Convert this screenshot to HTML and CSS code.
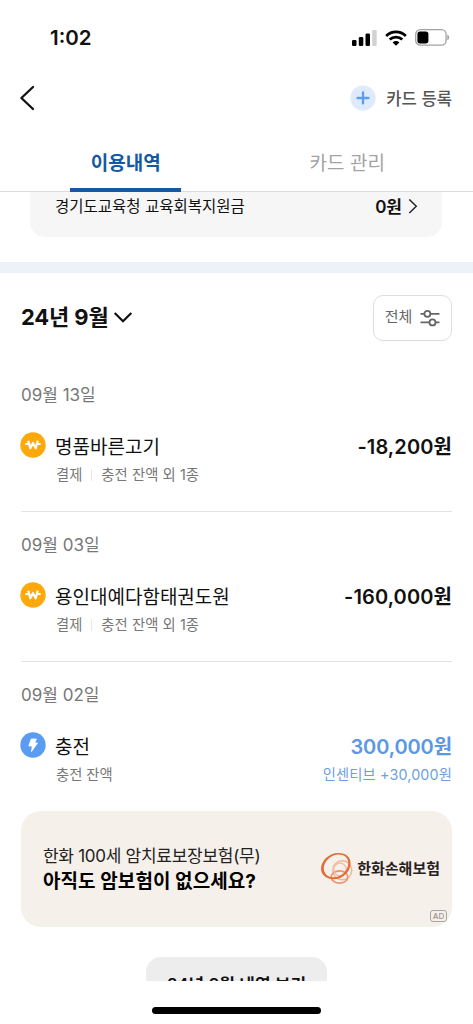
FILE: index.html
```html
<!DOCTYPE html>
<html lang="ko">
<head>
<meta charset="utf-8">
<meta name="viewport" content="width=device-width, initial-scale=1">
<title>이용내역</title>
<link rel="stylesheet" href="styles.css">
</head>
<body>
<div class="screen">
  <div class="status">
    <span class="clock">1:02</span>
    <div class="status-icons">
      <svg width="25" height="16" viewBox="0 0 25 16"><rect x="0" y="10" width="4.5" height="6" rx="1.3"/><rect x="6.8" y="7" width="4.5" height="9" rx="1.3"/><rect x="13.5" y="3.5" width="4.5" height="12.5" rx="1.3"/><rect x="20.2" y="0" width="4.5" height="16" rx="1.3" fill="#d2d2d2"/></svg>
      <svg class="wifi" width="22" height="16" viewBox="0 0 22 16"><g fill="none" stroke="#000" stroke-width="2.8"><path d="M1.2 5.9a14 14 0 0 1 19.6 0"/><path d="M4.7 9.6a9 9 0 0 1 12.6 0"/></g><path d="M11 15.8L7.6 12.4a4.8 4.8 0 0 1 6.8 0z"/></svg>
      <svg class="battery" width="35" height="17" viewBox="0 0 35 17"><rect x=".7" y=".7" width="30.4" height="15.4" rx="4.6" fill="none" stroke="#a2a2a2" stroke-width="1.3"/><rect x="2.4" y="2.4" width="11" height="12" rx="2.6"/><path d="M32.4 5.8c2.2.9 2.2 4.5 0 5.4z" fill="#999"/></svg>
    </div>
  </div>

  <header class="topbar">
    <svg width="16" height="26" viewBox="0 0 16 26"><path d="M14 2L2.4 13l11.600 11" fill="none" stroke="#111" stroke-width="2.3" stroke-linecap="round" stroke-linejoin="round"/></svg>
    <div class="register">
      <svg width="26" height="26" viewBox="0 0 26 26"><circle cx="13" cy="13" r="12.6" fill="#dfebfd"/><path d="M7.5 13h11M13 7.5v11" stroke="#5b9df2" stroke-width="2.3" stroke-linecap="round"/></svg>
      <span class="register-label">카드 등록</span>
    </div>
  </header>

  <nav class="tabs">
    <div class="tab tab-active"><span>이용내역</span></div>
    <div class="tab"><span>카드 관리</span></div>
  </nav>

  <div class="fund">
    <span class="fund-name">경기도교육청 교육회복지원금</span>
    <span class="fund-amount">0원</span>
    <svg width="10" height="16" viewBox="0 0 10 16"><path d="M1.3 .4L8.3 7.200l-7 6.800" fill="none" stroke="#222" stroke-width="1.4"/></svg>
  </div>
  <div class="band"></div>

  <section class="month">
    <div class="month-pick">
      <span class="month-label">24년 9월</span>
      <svg width="20" height="13" viewBox="0 0 20 13"><path d="M1.7 2L10 10.3 18.3 2" fill="none" stroke="#111" stroke-width="2.2"/></svg>
    </div>
    <div class="filter">
      <span>전체</span>
      <svg width="20" height="18" viewBox="0 0 20 18" fill="none" stroke="#666" stroke-width="1.8"><path d="M.5 4.800H4.200M10.600 4.800H19.500M.5 13.400H9.300M15.700 13.400H19.500"/><circle cx="7.4" cy="4.800" r="3"/><circle cx="12.5" cy="13.400" r="3"/></svg>
    </div>
  </section>

  <main>
    <article class="entry">
      <div class="date">09월 13일</div>
      <div class="row">
        <svg class="mark" width="26" height="26" viewBox="0 0 26 26"><circle cx="13" cy="13" r="12.7" fill="#fea90b"/><path d="M8.300 8.800l2 7.400L13 11l2.700 5.200 2-7.400M5.400 12h3M17.600 12h3" fill="none" stroke="#fff" stroke-width="2.2" stroke-linejoin="round"/></svg>
        <span class="name">명품바른고기</span><span class="amount">-18,200원</span>
      </div>
      <div class="sub"><span>결제</span><i class="sep"></i><span class="source">충전 잔액 외 1종</span></div>
    </article>
    <article class="entry">
      <div class="date">09월 03일</div>
      <div class="row">
        <svg class="mark" width="26" height="26" viewBox="0 0 26 26"><circle cx="13" cy="13" r="12.7" fill="#fea90b"/><path d="M8.300 8.800l2 7.400L13 11l2.700 5.200 2-7.400M5.400 12h3M17.600 12h3" fill="none" stroke="#fff" stroke-width="2.2" stroke-linejoin="round"/></svg>
        <span class="name">용인대예다함태권도원</span><span class="amount">-160,000원</span>
      </div>
      <div class="sub"><span>결제</span><i class="sep"></i><span class="source">충전 잔액 외 1종</span></div>
    </article>
    <article class="entry entry-last">
      <div class="date">09월 02일</div>
      <div class="row">
        <svg class="mark" width="26" height="26" viewBox="0 0 26 26"><circle cx="13" cy="13" r="12.7" fill="#5b9cf3"/><path d="M11.2 7h5.2l-1.600 4h2.700l-6 8.600.8-5.600H8.800z" fill="#fff" stroke="#fff" stroke-width=".8" stroke-linejoin="round"/></svg>
        <span class="name">충전</span><span class="amount plus">300,000원</span>
      </div>
      <div class="sub"><span>충전 잔액</span><span class="bonus">인센티브 +30,000원</span></div>
    </article>
  </main>

  <aside class="ad">
    <div class="ad-copy">
      <div class="ad-line">한화 100세 암치료보장보험(무)</div>
      <div class="ad-strong">아직도 암보험이 없으세요?</div>
    </div>
    <div class="brand">
      <svg width="34" height="34" viewBox="0 0 34 34" fill="none">
        <circle cx="22.3" cy="18.3" r="9.5" stroke="#efb79b" stroke-width="1.5"/>
        <ellipse cx="19.5" cy="25" rx="8.3" ry="6.2" stroke="#e8966f" stroke-width="1.7"/>
        <circle cx="20" cy="17.5" r="6.3" stroke="#f0bda4" stroke-width="1.3"/>
        <path fill-rule="evenodd" fill="#df6e38" d="M18.5 1C25.5.9 30.6 5 30.6 11.3 30.6 19.5 23 27.3 13.8 27.3 6.5 27.3 1 23 1 16.8 1 8.6 9 1.1 18.5 1zM18 2.6C10.8 2.9 3.8 9.7 3.8 16.5 3.8 21.8 8 25.3 13.8 25.3 21.3 25.3 28.3 18.5 28.3 11.3 28.3 5.8 24 2.4 18 2.6z"/>
      </svg>
      <span>한화손해보험</span>
    </div>
    <span class="ad-tag">AD</span>
  </aside>

  <div class="more-clip"><div class="more">24년 8월 내역 보기</div></div>
  <div class="home"></div>
</div>
</body>
</html>
```

FILE: styles.css
```css
* { box-sizing: border-box; }
body { margin: 0; background: #fff; font-family: Inter, "Noto Sans CJK KR", sans-serif; color: #111; }
.screen { width: 473px; height: 1024px; overflow: hidden; display: flex; flex-direction: column; white-space: nowrap; }
.screen > * { flex: none; }
svg { display: block; flex: none; }

.status { height: 75px; padding: 0 23px 0 50px; display: flex; align-items: center; justify-content: space-between; }
.clock { font-size: 20.5px; font-weight: 600; line-height: 24px; }
.status-icons { display: flex; align-items: center; }
.wifi { margin-left: 8px; }
.battery { margin-left: 8px; }

.topbar { height: 46px; padding: 0 21px 0 19px; display: flex; align-items: center; justify-content: space-between; }
.register { display: flex; align-items: center; gap: 10px; }
.register-label { font-family: "Noto Sans CJK KR", sans-serif; font-size: 16.6px; line-height: 24px; font-weight: 500; color: #555; }

.tabs { height: 71px; padding: 0 15px; display: flex; border-bottom: 1px solid #dcdcdc; }
.tab { flex: 1; display: flex; justify-content: center; padding-top: 29px; font-size: 19px; line-height: 28px; color: #a3a3a3; }
.tab-active { font-weight: 600; color: #1559a3; }
.tab-active span { width: 111px; height: 42px; text-align: center; border-bottom: 4px solid #1559a3; }

.fund { height: 45px; margin: 0 31px 25px 30px; padding: 1px 24px 16px 25px; border-radius: 0 0 15px 15px; background: #f6f6f6; display: flex; align-items: center; }
.fund-name { flex: 1; font-size: 15.5px; line-height: 24px; }
.fund-amount { font-size: 17px; font-weight: 600; margin-right: 6px; line-height: 24px; }
.band { height: 11px; background: #edf2f9; }

.month { height: 89px; padding: 0 21px; display: flex; align-items: center; justify-content: space-between; }
.month-pick { display: flex; align-items: center; gap: 5px; }
.month-label { font-size: 22px; line-height: 30px; font-weight: 700; letter-spacing: -.15px; margin-top: -1px; }
.filter { width: 79px; height: 46px; border: 1.5px solid #dedede; border-radius: 10px; display: flex; align-items: center; justify-content: center; gap: 8px; font-size: 15px; line-height: 22px; color: #666; }
.filter span { margin-top: -1px; }

.entry { height: 150px; margin: 0 21px; padding-top: 21px; border-bottom: 1px solid #e2e2e2; }
.entry-last { height: 149px; border-bottom: 0; }
.date { font-size: 17px; line-height: 24px; color: #777; }
.row { display: flex; align-items: center; height: 28px; margin-top: 26px; }
.mark { margin: -4px 9px 0 -1px; }
.name { flex: 1; font-size: 19px; line-height: 28px; padding-top: 2px; }
.amount { font-size: 20px; line-height: 28px; font-weight: 600; letter-spacing: .1px; }
.plus { color: #5b97e3; letter-spacing: -.1px; }
.sub { display: flex; align-items: center; margin: 3px 0 0 35px; font-size: 14.3px; line-height: 21px; color: #777; }
.sep { width: 1px; height: 12px; margin: 0 9px; background: #e8e8e8; }
.source { letter-spacing: .1px; }
.bonus { margin-left: auto; letter-spacing: .15px; color: #6c9fe0; }

.ad { position: relative; height: 116px; margin: 0 21px; padding: 0 12px 0 22px; border-radius: 20px; background: #f6f0ea; display: flex; align-items: center; justify-content: space-between; }
.ad-line { font-size: 17px; line-height: 26px; letter-spacing: -.28px; color: #222; }
.ad-strong { font-size: 19px; line-height: 26px; font-weight: 700; letter-spacing: .08px; color: #000; }
.brand { display: flex; align-items: center; gap: 3px; font-family: "Noto Sans CJK KR", sans-serif; font-size: 15px; line-height: 24px; font-weight: 700; color: #27211e; }
.brand span { margin-top: -2px; }
.ad-tag { position: absolute; right: 5px; bottom: 5px; width: 17px; height: 12px; border: 1px solid #aaa5a1; border-radius: 3px; font-size: 8px; line-height: 10px; text-align: center; font-weight: 500; color: #99948f; }

.more-clip { height: 24px; margin-top: 30px; overflow: hidden; display: flex; justify-content: center; }
.more { width: 181px; height: 56px; border-radius: 15px; background: #ededed; text-align: center; font-size: 17px; line-height: 56px; font-weight: 600; }
.home { width: 169px; height: 7px; margin: 26px auto 0; border-radius: 4px; background: #000; }
```
